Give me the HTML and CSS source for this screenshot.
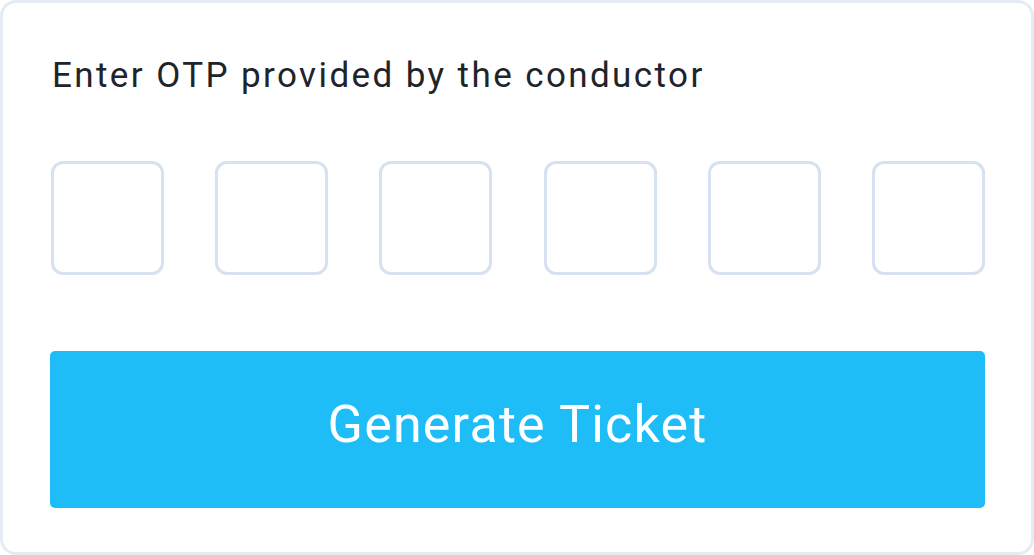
FILE: index.html
```html
<!DOCTYPE html>
<html>
<head>
<meta charset="utf-8">
<link rel="stylesheet" href="styles.css">
</head>
<body>
<div class="card">
  <p class="label">Enter OTP provided by the conductor</p>
  <div class="otp">
    <div class="digit"></div>
    <div class="digit"></div>
    <div class="digit"></div>
    <div class="digit"></div>
    <div class="digit"></div>
    <div class="digit"></div>
  </div>
  <button class="generate">Generate Ticket</button>
</div>
</body>
</html>
```
FILE: styles.css
```css
html, body {
  margin: 0;
  padding: 0;
  background: #ffffff;
}
.card {
  box-sizing: border-box;
  width: 1034px;
  height: 555px;
  border: 3px solid #e5ebf3;
  border-radius: 16px;
  padding: 52px 46px 0 47px;
  font-family: Roboto, "Noto Sans", sans-serif;
  background: #ffffff;
}
.label {
  margin: 0 0 0 2px;
  font-size: 35px;
  line-height: 41px;
  color: #1f242b;
  letter-spacing: 2.4px;
}
.otp {
  display: flex;
  justify-content: space-between;
  margin-top: 65px;
  padding: 0 0 0 1px;
}
.digit {
  box-sizing: border-box;
  width: 113px;
  height: 114px;
  border: 3px solid #d6e2f0;
  border-radius: 12px;
}
.generate {
  display: flex;
  align-items: center;
  justify-content: center;
  box-sizing: border-box;
  width: 100%;
  height: 157px;
  margin-top: 76px;
  border: none;
  border-radius: 5px;
  background: #1ebdf7;
  color: #ffffff;
  font-family: Roboto, "Noto Sans", sans-serif;
  font-size: 52px;
  font-weight: 400;
  letter-spacing: 1.2px;
  padding: 0 0 10px 0;
}
```
